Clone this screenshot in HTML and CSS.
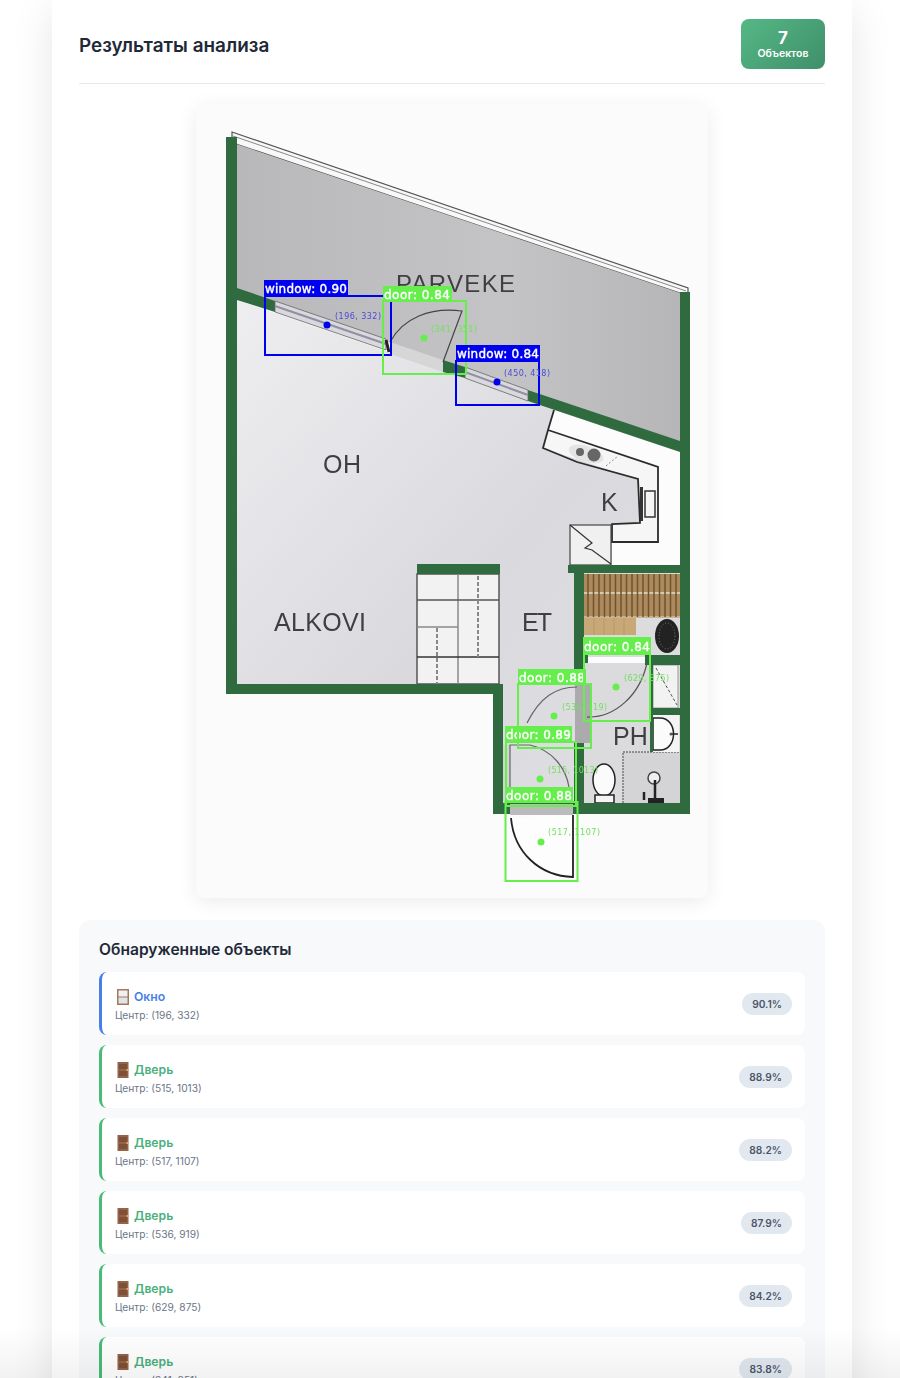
FILE: index.html
```html
<!DOCTYPE html>
<html>
  <head>
    <title>Результаты анализа</title>
    <link rel="stylesheet" href="styles.css">
  </head>
  <body>
    <div class="card">
      <div class="results-header">
        <h2>Результаты анализа</h2>
        <div class="count-badge">
          <span class="count-number">7</span>
          <span class="count-label">Объектов</span>
        </div>
      </div>

      <div class="image-frame">
        <svg class="plan" viewBox="196 104 512 794" xmlns="http://www.w3.org/2000/svg">
          <defs>
            <linearGradient id="floor" x1="0" y1="0" x2="1" y2="1">
              <stop offset="0" stop-color="#eeedf0"/>
              <stop offset="0.55" stop-color="#dad9dd"/>
              <stop offset="1" stop-color="#dfdee2"/>
            </linearGradient>
            <linearGradient id="balcony" x1="0" y1="0" x2="1" y2="0">
              <stop offset="0" stop-color="#b8b8ba"/>
              <stop offset="0.6" stop-color="#c4c4c6"/>
              <stop offset="1" stop-color="#b6b6b8"/>
            </linearGradient>
          </defs>

          <!-- balcony -->
          <polygon points="232,132 688,288 688,295 680,293 236,144 232,139" fill="#f8f8f8" stroke="#555" stroke-width="1.200"/>
          <line x1="233" y1="136" x2="686" y2="291" stroke="#888" stroke-width="1"/>
          <polygon points="236,144 680,293 680,442 236,290" fill="url(#balcony)"/>
          <text class="room" x="396" y="292" font-size="24" textLength="119">PARVEKE</text>

          <!-- floor -->
          <polygon points="237,300 680,452 680,803 503,803 503,684 237,684" fill="url(#floor)"/>

          <!-- kitchen -->
          <polygon points="554,410 680,452 680,565 612,565 612,524 640,523 638,479 543,448" fill="#fcfcfc"/>
          <polygon points="548,430 658,467 658,542 612,542 612,524 640,523 638,479 543,448" fill="#f6f6f6"/>
          <polyline points="554,410 548,430 543,448 577,462 638,479 640,523 612,524 612,542 658,542 658,467 548,430" fill="none" stroke="#2c2c2c" stroke-width="1.800"/>
          <rect x="645" y="491" width="10" height="26" fill="#f4f4f4" stroke="#333" stroke-width="1.500"/>
          <rect x="640" y="487" width="3" height="34" fill="#333"/>
          <ellipse cx="586" cy="454" rx="18" ry="8" fill="#e4e4e4" transform="rotate(18 586 454)"/>
          <circle cx="580" cy="452" r="4" fill="#666"/>
          <circle cx="594" cy="455" r="6.500" fill="#666"/>
          <line x1="606" y1="466" x2="618" y2="456" stroke="#888" stroke-dasharray="2 2"/>
          <rect x="570" y="525" width="41" height="40" fill="#f0f0f0" stroke="#444" stroke-width="1.200"/>
          <polyline points="570,525 592,543 585,548 592,550 611,564" fill="none" stroke="#333" stroke-width="1.200"/>
          <text class="room" x="601" y="511" font-size="25">K</text>

          <!-- closet -->
          <rect x="417" y="574" width="82" height="110" fill="#f2f2f2"/>
          <g stroke="#555" stroke-width="1.500" fill="none">
            <rect x="417" y="574" width="82" height="110"/>
            <line x1="458" y1="574" x2="458" y2="684" stroke="#888"/>
            <line x1="417" y1="600" x2="499" y2="600"/>
            <line x1="417" y1="627" x2="458" y2="627" stroke="#888"/>
            <line x1="417" y1="657" x2="499" y2="657" stroke="#333"/>
            <line x1="478" y1="576" x2="478" y2="657" stroke="#888" stroke-width="2" stroke-dasharray="4 2"/>
            <line x1="437" y1="628" x2="437" y2="684" stroke="#888" stroke-width="2" stroke-dasharray="4 2"/>
          </g>

          <text class="room" x="323" y="473" font-size="25" textLength="38">OH</text>
          <text class="room" x="274" y="631" font-size="25" textLength="92">ALKOVI</text>
          <text class="room" x="522" y="631" font-size="25" textLength="30">ET</text>

          <!-- sauna -->
          <rect x="584" y="573" width="96" height="83" fill="#dcdbde"/>
          <rect x="584" y="574" width="96" height="44" fill="#ad8a5c"/>
          <rect x="584" y="618" width="52" height="17" fill="#c9a878"/>
          <line x1="584" y1="593" x2="680" y2="593" stroke="#e6dccb" stroke-width="1.500"/>
          <line x1="584" y1="617" x2="680" y2="617" stroke="#e6dccb" stroke-width="1"/>
          <path d="M588 574V617M593.500 574V617M599 574V617M604.500 574V617M610 574V617M615.500 574V617M621 574V617M626.500 574V617M632 574V617M637.500 574V617M643 574V617M648.500 574V617M654 574V617M659.500 574V617M665 574V617M670.500 574V617M676 574V617" stroke="#6f5432" stroke-width="1.500"/>
          <path d="M594 618V635M604 618V635M614 618V635M624 618V635" stroke="#b8966a" stroke-width="1"/>
          <ellipse cx="667" cy="636" rx="12" ry="17" fill="#222"/>
          <ellipse cx="667" cy="636" rx="8" ry="13" fill="none" stroke="#777" stroke-dasharray="1 2"/>

          <!-- bathroom -->
          <rect x="584" y="662" width="96" height="141" fill="#dbdadd"/>
          <rect x="623" y="752" width="57" height="51" fill="#d4d3d6"/>
          <path d="M623 803V752H680" fill="none" stroke="#777" stroke-width="1.500" stroke-dasharray="2 1"/>
          <rect x="588" y="657" width="57" height="6" fill="#fbfbfb"/>
          <rect x="653" y="665" width="25" height="43" fill="#f2f2f2" stroke="#999"/>
          <line x1="656" y1="668" x2="677" y2="705" stroke="#555" stroke-dasharray="3 2"/>
          <rect x="652" y="715" width="27" height="37" fill="#f4f4f4"/>
          <path d="M653 718H660C678 718 678 750 660 750H653Z" fill="#fbfbfb" stroke="#222" stroke-width="1.500"/>
          <line x1="670" y1="734" x2="678" y2="734" stroke="#222" stroke-width="1.500"/>
          <circle cx="671" cy="734" r="1.500" fill="#555"/>
          <text class="room" x="613" y="745" font-size="25">PH</text>
          <ellipse cx="604" cy="780" rx="11" ry="16" fill="#fbfbfb" stroke="#222" stroke-width="1.500"/>
          <rect x="595" y="795" width="19" height="8" fill="#f4f4f4" stroke="#222" stroke-width="1.500"/>
          <circle cx="654" cy="778" r="6" fill="#eee" stroke="#444" stroke-width="1.500"/>
          <path d="M655 780V799M644 792V800" stroke="#222" stroke-width="2.500" fill="none"/>
          <rect x="648" y="798" width="16" height="5" fill="#222"/>

          <!-- walls -->
          <g fill="#2f6b3f">
            <rect x="226" y="137" width="11" height="557"/>
            <rect x="226" y="684" width="277" height="10"/>
            <rect x="493" y="684" width="10" height="130"/>
            <rect x="493" y="803" width="197" height="11"/>
            <rect x="680" y="292" width="10" height="522"/>
            <polygon points="237,288 275,301 275,312 237,300"/>
            <polygon points="443,360 465,367 465,378 443,372"/>
            <polygon points="528,390 680,441 680,452 528,401"/>
            <rect x="417" y="564" width="83" height="10"/>
            <rect x="568" y="565" width="112" height="8"/>
            <rect x="574" y="573" width="10" height="112"/>
            <rect x="574" y="743" width="10" height="60"/>
            <rect x="584" y="655" width="4" height="8"/>
            <rect x="645" y="655" width="35" height="10"/>
            <rect x="650" y="665" width="3" height="87"/>
            <rect x="650" y="708" width="30" height="7"/>
          </g>

          <!-- window and door openings -->
          <g>
            <polygon points="275,301 386,339 386,350 275,312" fill="#d8d8de" stroke="#666" stroke-width="0.800"/>
            <line x1="275" y1="306" x2="386" y2="344" stroke="#9090a0" stroke-width="2"/>
            <polygon points="465,367 528,390 528,401 465,378" fill="#d8d8de" stroke="#666" stroke-width="0.800"/>
            <line x1="465" y1="372" x2="528" y2="395" stroke="#9090a0" stroke-width="2"/>
            <polygon points="390,342 443,360 443,372 390,354" fill="#d6d6d6"/>
            <line x1="386" y1="340" x2="389" y2="352" stroke="#222" stroke-width="3"/>
            <path d="M390 342C403 318 430 307 462 311L443 362" fill="none" stroke="#444" stroke-width="1.200"/>
          </g>

          <!-- interior doors -->
          <rect x="575" y="685" width="15" height="58" fill="#ababae"/>
          <rect x="510" y="804" width="63" height="11" fill="#bbbbbd"/>
          <rect x="503" y="745" width="7" height="58" fill="#d4d3d6"/>
          <path d="M510 803V745H530C552 750 566 768 569 787" fill="none" stroke="#666" stroke-width="1.200"/>
          <path d="M527 723C540 697 556 687 577 687" fill="none" stroke="#666" stroke-width="1.200"/>
          <path d="M587 717C615 718 640 695 647 663" fill="none" stroke="#555" stroke-width="1.200"/>
          <path d="M511 818C514 853 540 876 573 877V815" fill="#fdfdfd" stroke="#222" stroke-width="1.800"/>

          <!-- detections -->
          <g class="det det-window">
            <rect class="det-box" x="265" y="296" width="126" height="59"/>
            <rect class="det-tag" x="264" y="280" width="84" height="16"/>
            <text class="det-name" x="265" y="293" textLength="82">window: 0.90</text>
            <circle class="det-dot" cx="327" cy="325" r="3.500"/>
            <text class="det-pos" x="335" y="319" textLength="46">(196, 332)</text>
          </g>
          <g class="det det-door">
            <rect class="det-box" x="383" y="301" width="83" height="73"/>
            <rect class="det-tag" x="383" y="286" width="69" height="15"/>
            <text class="det-name" x="384" y="299" textLength="66">door: 0.84</text>
            <circle class="det-dot" cx="424" cy="338" r="3.500"/>
            <text class="det-pos" x="431" y="332" textLength="46">(341, 351)</text>
          </g>
          <g class="det det-window">
            <rect class="det-box" x="456" y="361" width="83" height="44"/>
            <rect class="det-tag" x="456" y="345" width="84" height="16"/>
            <text class="det-name" x="457" y="358" textLength="82">window: 0.84</text>
            <circle class="det-dot" cx="497" cy="382" r="3.500"/>
            <text class="det-pos" x="504" y="376" textLength="46">(450, 418)</text>
          </g>
          <g class="det det-door">
            <rect class="det-box" x="506" y="742" width="70" height="64"/>
            <rect class="det-tag" x="505" y="726" width="67" height="16"/>
            <text class="det-name" x="506" y="739" textLength="65">door: 0.89</text>
            <circle class="det-dot" cx="540" cy="779" r="3.500"/>
            <text class="det-pos" x="548" y="773" textLength="50">(515, 1013)</text>
          </g>
          <g class="det det-door">
            <rect class="det-box" x="518" y="684" width="73" height="64"/>
            <rect class="det-tag" x="518" y="669" width="68" height="15"/>
            <text class="det-name" x="519" y="682" textLength="66">door: 0.88</text>
            <circle class="det-dot" cx="554" cy="716" r="3.500"/>
            <text class="det-pos" x="562" y="710" textLength="45">(536, 919)</text>
          </g>
          <g class="det det-door">
            <rect class="det-box" x="584" y="654" width="66" height="67"/>
            <rect class="det-tag" x="583" y="637" width="68" height="17"/>
            <text class="det-name" x="584" y="651" textLength="66">door: 0.84</text>
            <circle class="det-dot" cx="616" cy="687" r="3.500"/>
            <text class="det-pos" x="624" y="681" textLength="45">(629, 875)</text>
          </g>
          <g class="det det-door">
            <rect class="det-box" x="505.500" y="802" width="72" height="79"/>
            <rect class="det-tag" x="505" y="787" width="68" height="15"/>
            <text class="det-name" x="506" y="800" textLength="66">door: 0.88</text>
            <circle class="det-dot" cx="541" cy="842" r="3.500"/>
            <text class="det-pos" x="548" y="835" textLength="52">(517, 1107)</text>
          </g>
        </svg>
      </div>

      <div class="objects-panel">
        <h3>Обнаруженные объекты</h3>

        <div class="object-item window">
          <div class="object-info">
            <div class="object-name">
              <svg class="object-icon" viewBox="0 0 16 16"><rect x="2" y="0" width="12" height="16" fill="#a5775a"/><rect x="3.500" y="1.500" width="9" height="6" fill="#eef1f3"/><rect x="3.500" y="8.500" width="9" height="6" fill="#dfe4e8"/></svg>
              Окно
            </div>
            <div class="object-center">Центр: (196, 332)</div>
          </div>
          <span class="object-score">90.1%</span>
        </div>

        <div class="object-item door">
          <div class="object-info">
            <div class="object-name">
              <svg class="object-icon" viewBox="0 0 16 16"><rect x="2.500" y="0" width="11" height="16" fill="#94634a"/><rect x="4" y="2" width="8" height="5" fill="#7d5038"/><rect x="4" y="9" width="8" height="5" fill="#7d5038"/><rect x="11.500" y="7" width="2" height="2" fill="#e2b04a"/></svg>
              Дверь
            </div>
            <div class="object-center">Центр: (515, 1013)</div>
          </div>
          <span class="object-score">88.9%</span>
        </div>

        <div class="object-item door">
          <div class="object-info">
            <div class="object-name">
              <svg class="object-icon" viewBox="0 0 16 16"><rect x="2.500" y="0" width="11" height="16" fill="#94634a"/><rect x="4" y="2" width="8" height="5" fill="#7d5038"/><rect x="4" y="9" width="8" height="5" fill="#7d5038"/><rect x="11.500" y="7" width="2" height="2" fill="#e2b04a"/></svg>
              Дверь
            </div>
            <div class="object-center">Центр: (517, 1107)</div>
          </div>
          <span class="object-score">88.2%</span>
        </div>

        <div class="object-item door">
          <div class="object-info">
            <div class="object-name">
              <svg class="object-icon" viewBox="0 0 16 16"><rect x="2.500" y="0" width="11" height="16" fill="#94634a"/><rect x="4" y="2" width="8" height="5" fill="#7d5038"/><rect x="4" y="9" width="8" height="5" fill="#7d5038"/><rect x="11.500" y="7" width="2" height="2" fill="#e2b04a"/></svg>
              Дверь
            </div>
            <div class="object-center">Центр: (536, 919)</div>
          </div>
          <span class="object-score">87.9%</span>
        </div>

        <div class="object-item door">
          <div class="object-info">
            <div class="object-name">
              <svg class="object-icon" viewBox="0 0 16 16"><rect x="2.500" y="0" width="11" height="16" fill="#94634a"/><rect x="4" y="2" width="8" height="5" fill="#7d5038"/><rect x="4" y="9" width="8" height="5" fill="#7d5038"/><rect x="11.500" y="7" width="2" height="2" fill="#e2b04a"/></svg>
              Дверь
            </div>
            <div class="object-center">Центр: (629, 875)</div>
          </div>
          <span class="object-score">84.2%</span>
        </div>

        <div class="object-item door">
          <div class="object-info">
            <div class="object-name">
              <svg class="object-icon" viewBox="0 0 16 16"><rect x="2.500" y="0" width="11" height="16" fill="#94634a"/><rect x="4" y="2" width="8" height="5" fill="#7d5038"/><rect x="4" y="9" width="8" height="5" fill="#7d5038"/><rect x="11.500" y="7" width="2" height="2" fill="#e2b04a"/></svg>
              Дверь
            </div>
            <div class="object-center">Центр: (341, 351)</div>
          </div>
          <span class="object-score">83.8%</span>
        </div>
      </div>
    </div>
    <div class="bottom-fade"></div>
  </body>
</html>
```

FILE: styles.css
```css
html,
body {
  margin: 0;
  height: 1378px;
  overflow: hidden;
  background-color: #fff;
}
body {
  font-family: Inter, sans-serif;
  color: #1a202c;
}
.card {
  width: 746px;
  margin: 0 0 0 52px;
  padding: 19px 27px 27px;
  background-color: #fff;
  box-shadow: 0 10px 40px rgba(0, 0, 0, 0.1);
}
.results-header {
  display: flex;
  justify-content: space-between;
  align-items: center;
  padding-bottom: 14px;
  border-bottom: 1px solid #e2e8f0;
  margin-bottom: 20px;
}
.results-header h2 {
  margin: 0;
  padding-top: 2px;
  font-size: 18.900px;
  font-weight: 600;
  color: #1f2937;
}
.count-badge {
  display: flex;
  flex-direction: column;
  align-items: center;
  justify-content: center;
  width: 84px;
  height: 50px;
  border-radius: 8px;
  background: linear-gradient(135deg, #55b885, #3f8f6a);
  color: #fff;
}
.count-number {
  font-size: 17px;
  font-weight: 700;
  line-height: 19px;
}
.count-label {
  font-size: 10.500px;
  font-weight: 600;
  line-height: 11px;
}
.image-frame {
  width: 512px;
  height: 794px;
  margin: 0 auto 24px;
  border-radius: 8px;
  background-color: #fbfbfb;
  box-shadow: 0 4px 20px rgba(0, 0, 0, 0.08);
  overflow: hidden;
}
.plan {
  display: block;
  width: 512px;
  height: 794px;
  filter: blur(0.3px);
}
.room {
  font-family: "Liberation Sans", sans-serif;
  fill: #3f3f42;
}
.det-box {
  fill: none;
  stroke-width: 2;
}
.det-name {
  font-family: "DejaVu Sans", sans-serif;
  font-size: 12px;
  fill: #fff;
  stroke: #fff;
  stroke-width: 0.400px;
}
.det-pos {
  font-family: "DejaVu Sans", sans-serif;
  font-size: 8px;
}
.det-window .det-box {
  stroke: #0000f0;
}
.det-window .det-tag,
.det-window .det-dot {
  fill: #0000f0;
}
.det-window .det-pos {
  fill: #4a4ad8;
}
.det-door .det-box {
  stroke: #66ee4c;
}
.det-door .det-tag,
.det-door .det-dot {
  fill: #66ee4c;
}
.det-door .det-pos {
  fill: #74e060;
}
.objects-panel {
  margin-top: -2px;
  padding: 20px;
  border-radius: 12px;
  background-color: #f7f9fb;
}
.objects-panel h3 {
  margin: 0 0 13px;
  font-size: 15.600px;
  font-weight: 600;
  line-height: 19px;
  color: #1f2937;
}
.object-item {
  display: flex;
  justify-content: space-between;
  align-items: center;
  box-sizing: border-box;
  height: 63px;
  margin-bottom: 10px;
  padding: 0 13px;
  background-color: #fff;
  border-left: 3px solid #48bb78;
  border-radius: 8px;
}
.object-item.window {
  border-left-color: #4a7fe8;
}
.object-info {
  margin-top: 4px;
}
.object-name {
  display: flex;
  align-items: center;
  gap: 3px;
  font-size: 12.200px;
  font-weight: 600;
  line-height: 16px;
  color: #48b07c;
}
.window .object-name {
  color: #4a7fe8;
}
.object-icon {
  width: 16px;
  height: 16px;
}
.object-center {
  margin-top: 3px;
  font-size: 10.200px;
  line-height: 14px;
  color: #6b7587;
}
.object-score {
  padding: 4px 10px;
  border-radius: 12px;
  background-color: #e2e8f0;
  font-size: 10.200px;
  font-weight: 600;
  line-height: 14px;
  color: #4a5568;
}
.bottom-fade {
  position: fixed;
  left: 0;
  right: 0;
  bottom: 0;
  height: 50px;
  background: linear-gradient(rgba(0, 0, 0, 0), rgba(0, 0, 0, 0.05));
  pointer-events: none;
}
```
